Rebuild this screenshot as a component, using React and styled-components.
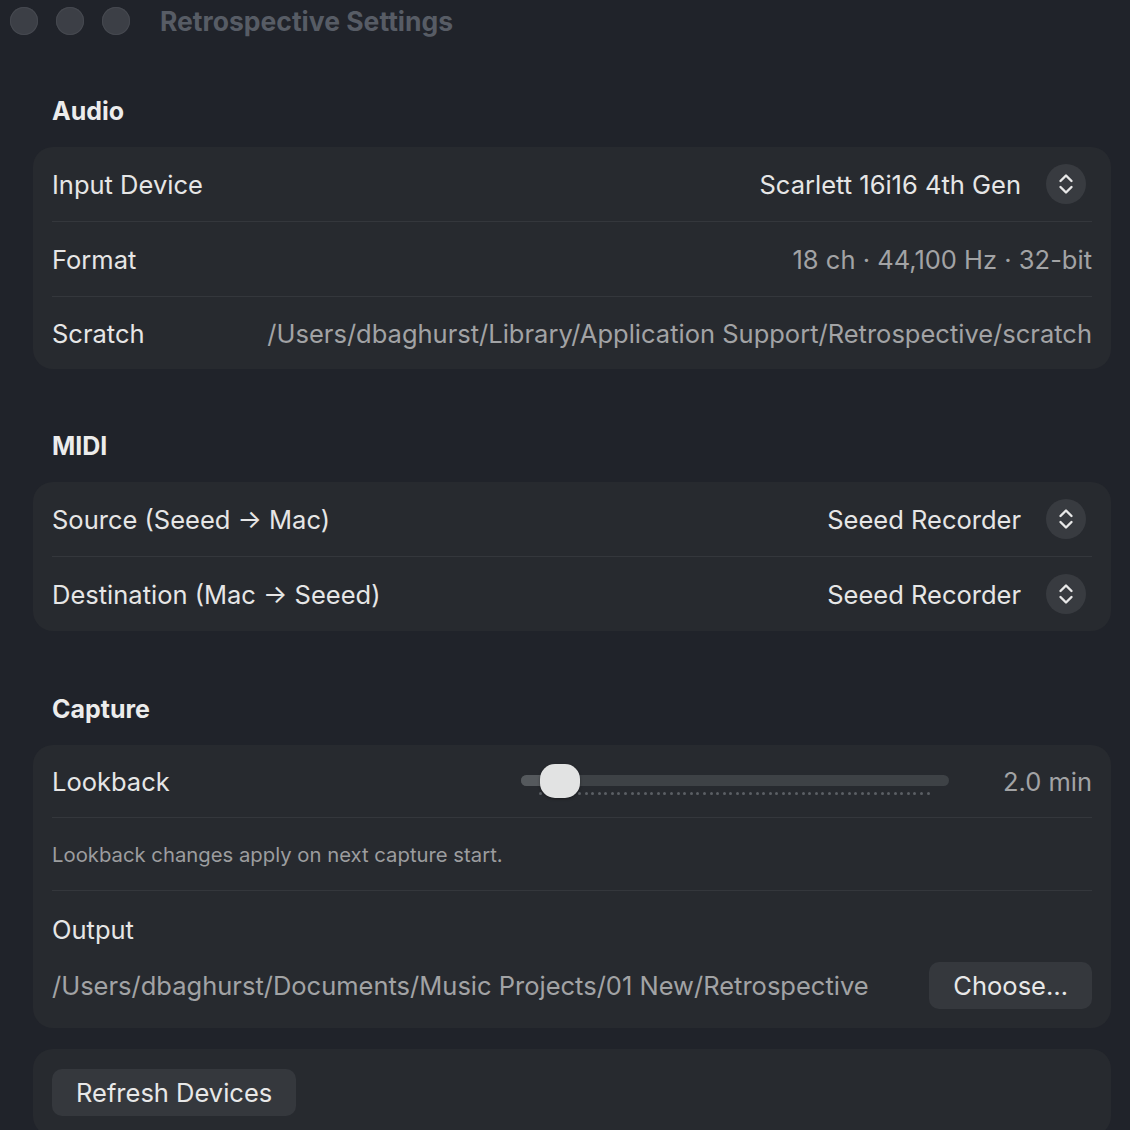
import React, {useState} from 'react';
import styled, {createGlobalStyle} from "styled-components";

const GlobalStyle = createGlobalStyle`
  html, body {
    margin: 0;
    padding: 0;
    background: #20232a;
  }
  body {
    font-family: "Inter", "Noto Sans", "Liberation Sans", sans-serif;
    -webkit-font-smoothing: antialiased;
  }
`

const Window = styled.div`
  width: 1130px;
  height: 1130px;
  overflow: hidden;
  background: #20232a;
  display: flex;
  flex-direction: column;
`

const TitleBar = styled.div`
  height: 44px;
  display: flex;
  align-items: center;
  padding-left: 10px;
  padding-top: 5px;
`

const Light = styled.span`
  width: 28px;
  height: 28px;
  border-radius: 50%;
  background: #3c3f46;
  box-shadow: inset 0 0 0 1px #464950;
  margin-right: 18px;
`

const WindowTitle = styled.div`
  margin-left: 12px;
  font-size: 26.5px;
  font-weight: 700;
  color: #575c65;
`

const Content = styled.div`
  padding: 0 19px 0 33px;
  display: flex;
  flex-direction: column;
`

const SectionTitle = styled.h2`
  margin: ${p => p.$top}px 0 21px 19px;
  font-size: 25px;
  line-height: 30px;
  font-weight: 700;
  color: #ececec;
`

const Panel = styled.div`
  background: #272a2f;
  border-radius: 20px;
  padding: 0 19px;
  margin-top: ${p => p.$top || 0}px;
`

const Row = styled.div`
  height: ${p => p.$h || 74}px;
  display: flex;
  align-items: center;
  border-top: ${p => p.$first ? "none" : "1px solid #34373c"};
`

const Label = styled.div`
  flex: 1;
  font-size: 25.5px;
  color: #e6e6e6;
  white-space: nowrap;
`

const Value = styled.div`
  font-size: 25.5px;
  color: ${p => p.$bright ? "#e6e6e6" : "#a2a3a5"};
  white-space: nowrap;
  text-align: right;
`

const Stepper = styled.span`
  width: 40px;
  height: 40px;
  border-radius: 50%;
  background: #383b40;
  margin-left: 25px;
  margin-right: 6px;
  display: flex;
  align-items: center;
  justify-content: center;
`

const Note = styled.div`
  font-size: 20.3px;
  color: #9c9d9f;
`

const SliderWrap = styled.div`
  position: relative;
  width: 428px;
  height: 40px;
`

const Track = styled.div`
  position: absolute;
  left: 0;
  right: 0;
  top: 14px;
  height: 11px;
  border-radius: 6px;
  background: #3e4246;
  overflow: hidden;
`

const Fill = styled.div`
  height: 100%;
  background: #55595d;
`

const Ticks = styled.div`
  position: absolute;
  left: 17.5px;
  right: 18.5px;
  top: 31px;
  display: flex;
  justify-content: space-between;
`

const Tick = styled.span`
  width: 3px;
  height: 3px;
  border-radius: 50%;
  background: #5b5f64;
`

const Knob = styled.div`
  position: absolute;
  top: 3px;
  width: 40px;
  height: 34px;
  margin-left: -20px;
  border-radius: 15px;
  background: #e2e3e3;
  box-shadow: 0 1px 3px rgba(0, 0, 0, 0.35);
`

const SliderValue = styled(Value)`
  width: 143px;
`

const OutputBlock = styled.div`
  border-top: 1px solid #34373c;
  padding: 23px 0 19px;
  display: flex;
  flex-direction: column;
  gap: 17px;
`

const OutputRow = styled.div`
  display: flex;
  align-items: center;
  justify-content: space-between;
`

const PathText = styled.div`
  font-size: 25.5px;
  color: #a2a3a5;
`

const Button = styled.button`
  height: 47px;
  padding: 0 24px;
  border: none;
  border-radius: 10px;
  background: #35383d;
  color: #e8e8e8;
  font-family: inherit;
  font-size: 25.5px;
`

const ButtonPanel = styled(Panel)`
  padding-top: 20px;
  padding-bottom: 20px;
`

const Chevrons = () => (
    <svg width="16" height="24" viewBox="0 0 16 24" fill="none" stroke="#e8e8e8" strokeWidth="2.4" strokeLinecap="round" strokeLinejoin="round">
        <path d="M2.5 9 L8 3.5 L13.5 9"/>
        <path d="M2.5 15 L8 20.5 L13.5 15"/>
    </svg>
)

const Popup = ({label, value}) => (
    <>
        <Label>{label}</Label>
        <Value $bright>{value}</Value>
        <Stepper><Chevrons/></Stepper>
    </>
)

const Slider = ({value, min, max, step}) => {
    // knob travels between the first and last tick
    const start = 19, end = 408;
    const count = Math.round((max - min) / step) + 1;
    const pos = start + (end - start) * (value - min) / (max - min);
    return (
        <SliderWrap>
            <Track><Fill style={{width: pos}}/></Track>
            <Ticks>
                {Array.from({length: count}).map((_, i) => <Tick key={i}/>)}
            </Ticks>
            <Knob style={{left: pos}}/>
        </SliderWrap>
    )
}

const App = () => {
    const [lookback] = useState(2.0);
    return (
        <Window>
            <GlobalStyle/>
            <TitleBar>
                <Light/><Light/><Light/>
                <WindowTitle>Retrospective Settings</WindowTitle>
            </TitleBar>
            <Content>
                <SectionTitle $top={59}>Audio</SectionTitle>
                <Panel>
                    <Row $first><Popup label="Input Device" value="Scarlett 16i16 4th Gen"/></Row>
                    <Row>
                        <Label>Format</Label>
                        <Value>18 ch · 44,100 Hz · 32-bit</Value>
                    </Row>
                    <Row $h={72}>
                        <Label>Scratch</Label>
                        <Value>/Users/dbaghurst/Library/Application Support/Retrospective/scratch</Value>
                    </Row>
                </Panel>

                <SectionTitle $top={62}>MIDI</SectionTitle>
                <Panel>
                    <Row $first><Popup label="Source (Seeed → Mac)" value="Seeed Recorder"/></Row>
                    <Row><Popup label="Destination (Mac → Seeed)" value="Seeed Recorder"/></Row>
                </Panel>

                <SectionTitle $top={63}>Capture</SectionTitle>
                <Panel>
                    <Row $first $h={72}>
                        <Label>Lookback</Label>
                        <Slider value={lookback} min={0.5} max={30} step={0.5}/>
                        <SliderValue>{lookback.toFixed(1)} min</SliderValue>
                    </Row>
                    <Row $h={72}>
                        <Note>Lookback changes apply on next capture start.</Note>
                    </Row>
                    <OutputBlock>
                        <Label>Output</Label>
                        <OutputRow>
                            <PathText>/Users/dbaghurst/Documents/Music Projects/01 New/Retrospective</PathText>
                            <Button>Choose…</Button>
                        </OutputRow>
                    </OutputBlock>
                </Panel>

                <ButtonPanel $top={21}>
                    <Button>Refresh Devices</Button>
                </ButtonPanel>
            </Content>
        </Window>
    );
};

export default App;
